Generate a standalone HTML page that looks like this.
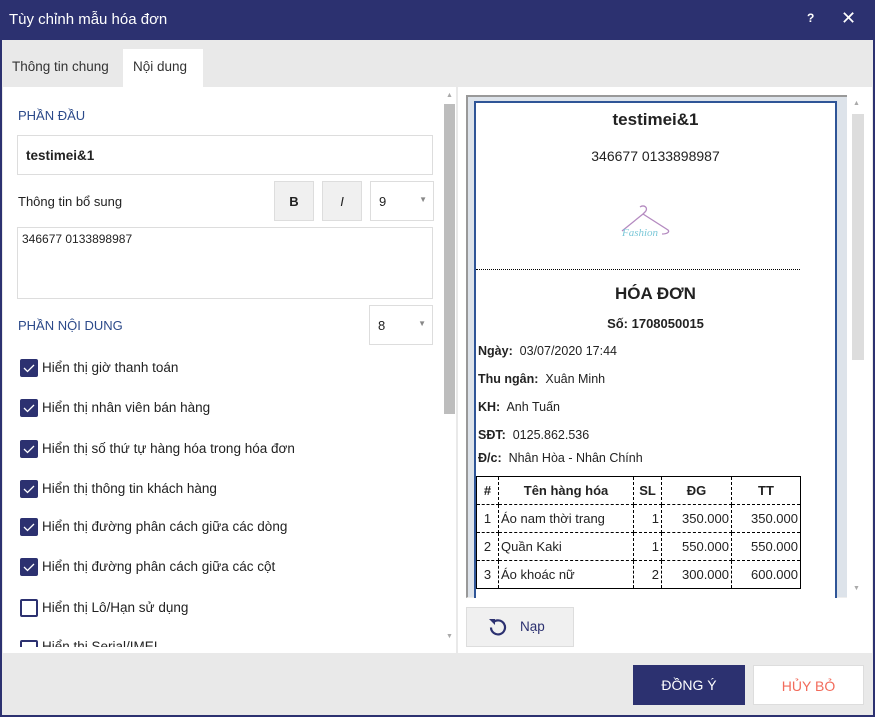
<!DOCTYPE html>
<html><head><meta charset="utf-8"><style>
*{box-sizing:border-box;margin:0;padding:0}
body{width:875px;height:717px;overflow:hidden;background:#2c3170;font-family:"Liberation Sans","DejaVu Sans",sans-serif;position:relative;font-size:13px;color:#222}
.abs{position:absolute}
.title{left:9px;top:11px;color:#fff;font-size:15px}
.body{left:2px;top:40px;width:871px;height:675px;background:#e9e9e9}
.tab{top:49px;height:38px;font-size:13.5px;padding-top:10px}
.panel{background:#fff}
.inp{border:1px solid #ddd;background:#fff}
.lbl{font-size:13px}
.cb{width:18px;height:18px;border-radius:2px;background:#2c3170;left:20px}
.cb svg{display:block}
.cbt{left:42px;font-size:13.5px;color:#222}
.paper td,.paper th{border:1px dashed #000;font-size:13px;padding:0 2px;height:28px}
.paper th{font-weight:bold;text-align:center}
.paper table{border-collapse:collapse;border:1.5px solid #000}
</style></head><body>
<div class="abs title">Tùy chỉnh mẫu hóa đơn</div>
<div class="abs" style="left:807px;top:11px;color:#fff;font-weight:bold;font-size:12px">?</div>
<div class="abs" style="left:841px;top:8px;color:#fff;font-weight:bold;font-size:18px">✕</div>
<div class="abs body"></div>
<div class="abs tab" style="left:12px;color:#333">Thông tin chung</div>
<div class="abs tab" style="left:123px;width:80px;background:#fff;padding-left:10px;color:#333">Nội dung</div>
<div class="abs panel" style="left:3px;top:87px;width:453px;height:566px"></div>
<div class="abs panel" style="left:458px;top:87px;width:414px;height:566px"></div>
<div class="abs" style="left:444px;top:104px;width:11px;height:310px;background:#bdbdbd"></div>
<div class="abs" style="left:446px;top:92px;color:#aaa;font-size:7px">▲</div>
<div class="abs" style="left:446px;top:633px;color:#aaa;font-size:7px">▼</div>
<div class="abs lbl" style="left:18px;top:108px;color:#2c4a8a">PHẦN ĐẦU</div>
<div class="abs inp" style="left:17px;top:135px;width:416px;height:40px"></div>
<div class="abs" style="left:26px;top:148px;font-weight:bold;font-size:13.5px">testimei&amp;1</div>
<div class="abs lbl" style="left:18px;top:194px">Thông tin bổ sung</div>
<div class="abs" style="left:274px;top:181px;width:40px;height:40px;background:#f0f0f0;border:1px solid #ddd;text-align:center;padding-top:12px;font-weight:bold">B</div>
<div class="abs" style="left:322px;top:181px;width:40px;height:40px;background:#f0f0f0;border:1px solid #ddd;text-align:center;padding-top:12px;font-style:italic">I</div>
<div class="abs inp" style="left:370px;top:181px;width:64px;height:40px;padding:12px 8px">9<span style="position:absolute;right:6px;top:13px;font-size:8px;color:#888">▼</span></div>
<div class="abs inp" style="left:17px;top:227px;width:416px;height:72px;padding:4px 4px;font-size:12px">346677 0133898987</div>
<div class="abs lbl" style="left:18px;top:318px;color:#2c4a8a">PHẦN NỘI DUNG</div>
<div class="abs inp" style="left:369px;top:305px;width:64px;height:40px;padding:12px 8px">8<span style="position:absolute;right:6px;top:13px;font-size:8px;color:#888">▼</span></div>
<div class="abs cb" style="top:359px"><svg width="18" height="18"><path d="M4 9l3.5 3.5L14 6" stroke="#fff" stroke-width="1.3" fill="none"/></svg></div><div class="abs cbt" style="top:360px">Hiển thị giờ thanh toán</div>
<div class="abs cb" style="top:399px"><svg width="18" height="18"><path d="M4 9l3.5 3.5L14 6" stroke="#fff" stroke-width="1.3" fill="none"/></svg></div><div class="abs cbt" style="top:400px">Hiển thị nhân viên bán hàng</div>
<div class="abs cb" style="top:440px"><svg width="18" height="18"><path d="M4 9l3.5 3.5L14 6" stroke="#fff" stroke-width="1.3" fill="none"/></svg></div><div class="abs cbt" style="top:441px">Hiển thị số thứ tự hàng hóa trong hóa đơn</div>
<div class="abs cb" style="top:480px"><svg width="18" height="18"><path d="M4 9l3.5 3.5L14 6" stroke="#fff" stroke-width="1.3" fill="none"/></svg></div><div class="abs cbt" style="top:481px">Hiển thị thông tin khách hàng</div>
<div class="abs cb" style="top:518px"><svg width="18" height="18"><path d="M4 9l3.5 3.5L14 6" stroke="#fff" stroke-width="1.3" fill="none"/></svg></div><div class="abs cbt" style="top:519px">Hiển thị đường phân cách giữa các dòng</div>
<div class="abs cb" style="top:558px"><svg width="18" height="18"><path d="M4 9l3.5 3.5L14 6" stroke="#fff" stroke-width="1.3" fill="none"/></svg></div><div class="abs cbt" style="top:559px">Hiển thị đường phân cách giữa các cột</div>
<div class="abs cb" style="top:599px;background:#fff;border:2px solid #2c3170"></div><div class="abs cbt" style="top:600px">Hiển thị Lô/Hạn sử dụng</div>
<div class="abs" style="left:0;top:638px;width:443px;height:9px;overflow:hidden"><div class="abs cb" style="top:2px;background:#fff;border:2px solid #2c3170"></div><div class="abs cbt" style="top:1px">Hiển thị Serial/IMEI</div></div>
<div class="abs" style="left:466px;top:95px;width:381px;height:503px;background:#dde3ea;border-top:2px solid #999;border-left:2px solid #999;border-bottom:1px solid #eee"></div>
<div class="abs paper" style="left:474px;top:101px;width:363px;height:497px;background:#fff;border:2px solid #2f5597;border-bottom:none">
 <div class="abs" style="left:0;width:100%;top:7px;text-align:center;font-weight:bold;font-size:17px">testimei&amp;1</div>
 <div class="abs" style="left:0;width:100%;top:45px;text-align:center;font-size:14px">346677 0133898987</div>
 <svg class="abs" style="left:142px;top:100px" width="56" height="40"><path d="M22 4c4-3 9 1 5 5l-2 2 M25 11L4 28 M25 11l25 16c2 2-1 4-6 4" stroke="#b48ac0" stroke-width="1.3" fill="none"/><text x="4" y="33" font-size="11" font-style="italic" fill="#7cc8d8" font-family="Liberation Serif">Fashion</text></svg>
 <div class="abs" style="left:0;top:166px;width:324px;border-top:1.5px dotted #000"></div>
 <div class="abs" style="left:0;width:100%;top:181px;text-align:center;font-weight:bold;font-size:17px">HÓA ĐƠN</div>
 <div class="abs" style="left:0;width:100%;top:213px;text-align:center;font-weight:bold;font-size:13px">Số: 1708050015</div>
 <div class="abs" style="left:2px;top:241px;font-size:12.5px"><b>Ngày:</b>&nbsp; 03/07/2020 17:44</div>
 <div class="abs" style="left:2px;top:269px;font-size:12.5px"><b>Thu ngân:</b>&nbsp; Xuân Minh</div>
 <div class="abs" style="left:2px;top:297px;font-size:12.5px"><b>KH:</b>&nbsp; Anh Tuấn</div>
 <div class="abs" style="left:2px;top:325px;font-size:12.5px"><b>SĐT:</b>&nbsp; 0125.862.536</div>
 <div class="abs" style="left:2px;top:348px;font-size:12.5px"><b>Đ/c:</b>&nbsp; Nhân Hòa - Nhân Chính</div>
 <table class="abs" style="left:0;top:373px;width:325px">
  <tr><th style="width:22px">#</th><th style="width:135px">Tên hàng hóa</th><th style="width:28px">SL</th><th style="width:70px">ĐG</th><th>TT</th></tr>
  <tr><td style="text-align:center">1</td><td>Áo nam thời trang</td><td style="text-align:right">1</td><td style="text-align:right">350.000</td><td style="text-align:right">350.000</td></tr>
  <tr><td style="text-align:center">2</td><td>Quần Kaki</td><td style="text-align:right">1</td><td style="text-align:right">550.000</td><td style="text-align:right">550.000</td></tr>
  <tr><td style="text-align:center">3</td><td>Áo khoác nữ</td><td style="text-align:right">2</td><td style="text-align:right">300.000</td><td style="text-align:right">600.000</td></tr>
 </table>
</div>
<div class="abs" style="left:852px;top:114px;width:12px;height:246px;background:#ddd"></div>
<div class="abs" style="left:853px;top:100px;color:#aaa;font-size:7px">▲</div>
<div class="abs" style="left:853px;top:585px;color:#aaa;font-size:7px">▼</div>
<div class="abs" style="left:466px;top:607px;width:108px;height:40px;background:#f0f0f0;border:1px solid #ddd"></div>
<svg class="abs" style="left:486px;top:616px" width="22" height="22"><path d="M7 6.5a7 7 0 1 1-2 5" stroke="#2c3170" stroke-width="2.2" fill="none"/><path d="M3 3h6v6z" fill="#2c3170"/></svg>
<div class="abs" style="left:520px;top:619px;color:#2c3170;font-size:13.5px">Nạp</div>
<div class="abs" style="left:633px;top:665px;width:112px;height:40px;background:#2c3170;color:#fff;text-align:center;padding-top:12px;font-size:14px">ĐỒNG Ý</div>
<div class="abs" style="left:753px;top:665px;width:111px;height:40px;background:#fff;border:1px solid #ddd;color:#f26b5b;text-align:center;padding-top:12px;font-size:14px">HỦY BỎ</div>
</body></html>
